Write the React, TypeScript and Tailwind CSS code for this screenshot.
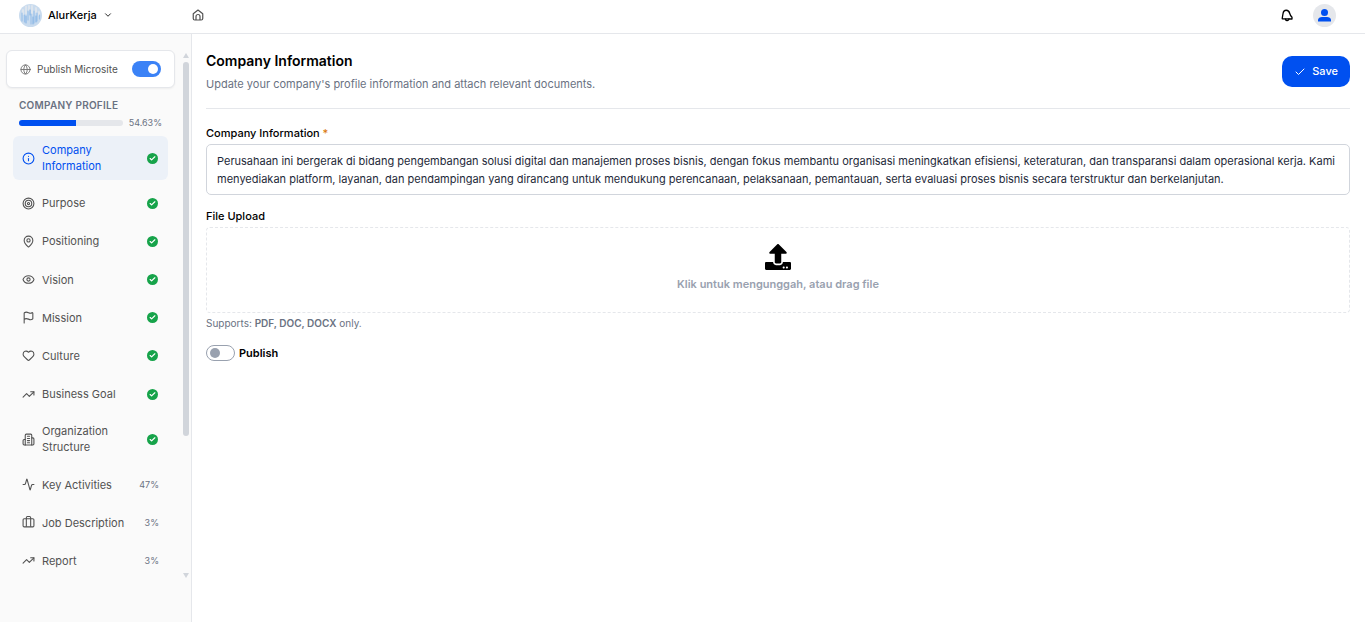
import { useState } from 'react'
import {
  Activity, Check, ChevronDown, Eye, Flag, Globe, Heart, Info,
  MapPin, Target, TrendingUp,
} from 'lucide-react'
import type { ComponentType } from 'react'
import { FaUpload } from 'react-icons/fa'

type IconProps = { size?: number; strokeWidth?: number; className?: string }
type NavItem = { label: string; icon: ComponentType<IconProps>; progress?: string }

function Suitcase({ size = 24, strokeWidth = 2, className }: IconProps) {
  return (
    <svg width={size} height={size} viewBox="0 0 24 24" fill="none" stroke="currentColor" strokeWidth={strokeWidth} strokeLinejoin="round" className={className} aria-hidden="true">
      <rect x="2" y="5" width="20" height="15" rx="2" />
      <path d="M8 20V3a2 2 0 0 1 2-2h4a2 2 0 0 1 2 2v17" />
    </svg>
  )
}

function Building({ size = 24, strokeWidth = 2, className }: IconProps) {
  return (
    <svg width={size} height={size} viewBox="0 0 24 24" fill="none" stroke="currentColor" strokeWidth={strokeWidth} strokeLinecap="round" strokeLinejoin="round" className={className} aria-hidden="true">
      <path d="M6 22V4a2 2 0 0 1 2-2h8a2 2 0 0 1 2 2v18z" />
      <path d="M6 12H4a2 2 0 0 0-2 2v6a2 2 0 0 0 2 2h2M18 9h2a2 2 0 0 1 2 2v9a2 2 0 0 1-2 2h-2" />
      <path d="M10 6h4M10 10h4M10 14h4M10 18h4" />
    </svg>
  )
}

const NAV: NavItem[] = [
  { label: 'Company Information', icon: Info },
  { label: 'Purpose', icon: Target },
  { label: 'Positioning', icon: MapPin },
  { label: 'Vision', icon: Eye },
  { label: 'Mission', icon: Flag },
  { label: 'Culture', icon: Heart },
  { label: 'Business Goal', icon: TrendingUp },
  { label: 'Organization Structure', icon: Building },
  { label: 'Key Activities', icon: Activity, progress: '47%' },
  { label: 'Job Description', icon: Suitcase, progress: '3%' },
  { label: 'Report', icon: TrendingUp, progress: '3%' },
]

const DESCRIPTION =
  'Perusahaan ini bergerak di bidang pengembangan solusi digital dan manajemen proses bisnis, dengan fokus membantu organisasi meningkatkan efisiensi, keteraturan, dan transparansi dalam operasional kerja. Kami menyediakan platform, layanan, dan pendampingan yang dirancang untuk mendukung perencanaan, pelaksanaan, pemantauan, serta evaluasi proses bisnis secara terstruktur dan berkelanjutan.'

function Logo() {
  return (
    <svg width="23" height="23" viewBox="0 0 23 23" aria-hidden="true">
      <circle cx="11.5" cy="11.5" r="11.5" fill="#c9dbee" />
      <g fill="none" strokeLinecap="round">
        <path d="M4 6v4M7 2.500v7M10 2v5M13 2v7M17 4v4M20 8v3" stroke="#dfe6ee" strokeWidth="1.800" />
        <path d="M3 9v8M5.500 11v7M9 7v9M12 10v10M15 7v12M18 9v8M20.500 11v4" stroke="#9cc2ea" strokeWidth="1.200" />
        <path d="M7 12v7M11 6v5M14 13v7M17 12v6" stroke="#7eafe4" strokeWidth="1" />
      </g>
    </svg>
  )
}

function HomeIcon() {
  return (
    <svg width="12" height="12" viewBox="0 0 24 24" fill="none" stroke="currentColor" strokeWidth="2.400" strokeLinejoin="round" aria-hidden="true">
      <path d="M2.500 9.500 12 2l9.500 7.500V19a3 3 0 0 1-3 3h-13a3 3 0 0 1-3-3z" />
      <path d="M8 22v-7a4 4 0 0 1 8 0v7" />
    </svg>
  )
}

function BellIcon() {
  return (
    <svg width="12" height="13" viewBox="0 0 24 26" fill="none" stroke="currentColor" strokeWidth="2.600" strokeLinejoin="round" strokeLinecap="round" aria-hidden="true">
      <path d="M4 9.500C4.500 5 7 2.500 10.500 2.500S16.500 5 17.500 9c.8 3.500 2 5 4.500 7.500v3.500L2.500 19.500c0-4 1-6 1.500-10z" />
      <path d="M9 20.500c.5 2 2 3 3.800 2.800s3-1.500 3.200-3.300" />
    </svg>
  )
}

function DoneBadge() {
  return (
    <span className="grid size-[11px] shrink-0 place-items-center rounded-full bg-[#16a34a]">
      <Check size={7} strokeWidth={4} className="text-white" />
    </span>
  )
}

export default function App() {
  const [active, setActive] = useState('Company Information')
  const [microsite, setMicrosite] = useState(true)
  const [publish, setPublish] = useState(false)

  return (
    <div className="flex min-h-screen flex-col bg-white font-['Inter','Liberation_Sans',sans-serif] text-[11px] text-black">
      {/* Top bar */}
      <header className="flex h-[34px] items-center border-b border-gray-200 pb-[3px]">
        <div className="flex w-[192px] items-center pl-[19px]">
          <button type="button" className="flex items-center gap-[6px] font-medium">
            <Logo />
            AlurKerja
            <ChevronDown size={10} />
          </button>
        </div>
        <a href="#home" aria-label="Home" className="text-neutral-600">
          <HomeIcon />
        </a>
        <div className="ml-auto flex items-center gap-5 pr-[29px]">
          <button type="button" aria-label="Notifications">
            <BellIcon />
          </button>
          <button type="button" aria-label="Account" className="grid size-[23px] place-items-center rounded-full bg-gray-200 text-[#0050f0]">
            <svg width="13" height="13" viewBox="0 0 13 13" fill="currentColor" aria-hidden="true">
              <circle cx="6.500" cy="3.500" r="3.500" />
              <path d="M0 12.500V11c0-2 2-3 4-3h5c2 0 4 1 4 3v1.500z" />
            </svg>
          </button>
        </div>
      </header>

      <div className="flex flex-1">
        {/* Sidebar */}
        <aside className="flex w-[192px] shrink-0 border-r border-gray-200 bg-[#fafafa] pt-4 pb-10">
          <div className="flex w-[182px] flex-col pb-[6px]">
            <label className="mr-[7px] ml-[6px] flex h-[38px] items-center rounded-md border border-gray-200 bg-white px-[13px] text-[10px] text-neutral-600 shadow-xs">
              <Globe size={11} strokeWidth={2} className="text-neutral-500" />
              <span className="ml-[6px]">Publish Microsite</span>
              <input
                type="checkbox"
                checked={microsite}
                onChange={e => setMicrosite(e.target.checked)}
                className="peer sr-only"
              />
              <span className="ml-auto flex h-4 w-[29px] items-center rounded-full bg-gray-300 px-[3px] peer-checked:justify-end peer-checked:bg-[#3b82f6]">
                <span className="size-[10px] rounded-full bg-white" />
              </span>
            </label>

            <h2 className="mt-[10px] ml-[19px] text-[10px] leading-[14px] font-semibold tracking-wide text-gray-500">
              COMPANY PROFILE
            </h2>
            <div className="mt-[6px] mr-5 ml-[19px] flex h-[10px] items-center gap-[6px]">
              <div className="h-[6px] flex-1 overflow-hidden rounded-full bg-gray-200">
                <div className="h-full bg-[#0050f0]" style={{ width: '54.63%' }} />
              </div>
              <span className="text-[9px] text-gray-500">54.63%</span>
            </div>

            <nav className="mt-2 mr-[14px] ml-[13px] flex flex-1 flex-col justify-between">
              {NAV.map(({ label, icon: Icon, progress }) => (
                <button
                  key={label}
                  type="button"
                  onClick={() => setActive(label)}
                  className={
                    label === active
                      ? 'flex min-h-[30px] items-center rounded-md bg-[#ecf1f8] px-[9px] py-[6px] text-left leading-4 text-[#0050f0]'
                      : 'flex min-h-[30px] items-center rounded-md px-[9px] py-[6px] text-left leading-4 text-neutral-600'
                  }
                >
                  <Icon size={13} strokeWidth={2} className="shrink-0" />
                  <span className="ml-[7px] w-[88px]">{label}</span>
                  {progress
                    ? <span className="ml-auto text-[9px] text-gray-500">{progress}</span>
                    : <span className="mr-px ml-auto"><DoneBadge /></span>}
                </button>
              ))}
            </nav>
          </div>

          {/* Scroll track */}
          <div className="flex w-2 flex-col items-center text-[#d1d5db]" aria-hidden="true">
            <svg width="6" height="5" viewBox="0 0 6 5" className="mt-[3px]" fill="currentColor"><path d="M3 0 6 5H0z" /></svg>
            <div className="mt-1 h-[374px] w-[6px] rounded-full bg-[#d1d5db]" />
            <svg width="6" height="5" viewBox="0 0 6 5" className="mt-auto mb-1" fill="currentColor"><path d="M0 0h6L3 5z" /></svg>
          </div>
        </aside>

        {/* Form */}
        <main className="min-w-0 flex-1 pt-[18px] pr-[15px] pl-[14px]">
          <div className="flex items-start justify-between border-b border-gray-200 pb-4">
            <div>
              <h1 className="text-[14px] leading-[18px] font-semibold">Company Information</h1>
              <p className="mt-[6px] leading-4 text-gray-500">
                Update your company's profile information and attach relevant documents.
              </p>
            </div>
            <button type="button" className="mt-1 flex h-[31px] items-center gap-[6px] rounded-[10px] bg-[#0050f0] px-3 font-medium text-white">
              <Check size={12} strokeWidth={2} />
              Save
            </button>
          </div>

          <label htmlFor="company-info" className="mt-4 block leading-4 font-medium">
            Company Information <span className="text-[#d97706]">*</span>
          </label>
          <textarea
            id="company-info"
            rows={2}
            defaultValue={DESCRIPTION}
            className="mt-[3px] block h-[51px] w-full resize-none overflow-hidden rounded-[5px] border border-gray-300 px-[10px] py-[7px] leading-[18px] text-gray-800"
          />

          <p className="mt-[13px] leading-4 font-medium">File Upload</p>
          <label className="mt-[3px] flex h-[86px] cursor-pointer flex-col items-center rounded-[4px] border border-dashed border-gray-200 pt-4">
            <FaUpload size={26} />
            <span className="mt-[6px] leading-4 font-semibold text-gray-400">Klik untuk mengunggah, atau drag file</span>
            <input type="file" className="sr-only" accept=".pdf,.doc,.docx" />
          </label>
          <p className="mt-[2px] text-[10px] leading-4 text-gray-500">
            Supports: <strong className="font-semibold">PDF, DOC, DOCX</strong> only.
          </p>

          <label className="mt-[14px] flex w-fit items-center gap-1 leading-4 font-semibold">
            <input
              type="checkbox"
              checked={publish}
              onChange={e => setPublish(e.target.checked)}
              className="peer sr-only"
            />
            <span className="flex h-4 w-[29px] items-center rounded-full border border-gray-400 px-[3px] text-gray-400 peer-checked:justify-end peer-checked:text-[#3b82f6]">
              <span className="size-[10px] rounded-full bg-current" />
            </span>
            Publish
          </label>
        </main>
      </div>
    </div>
  )
}
